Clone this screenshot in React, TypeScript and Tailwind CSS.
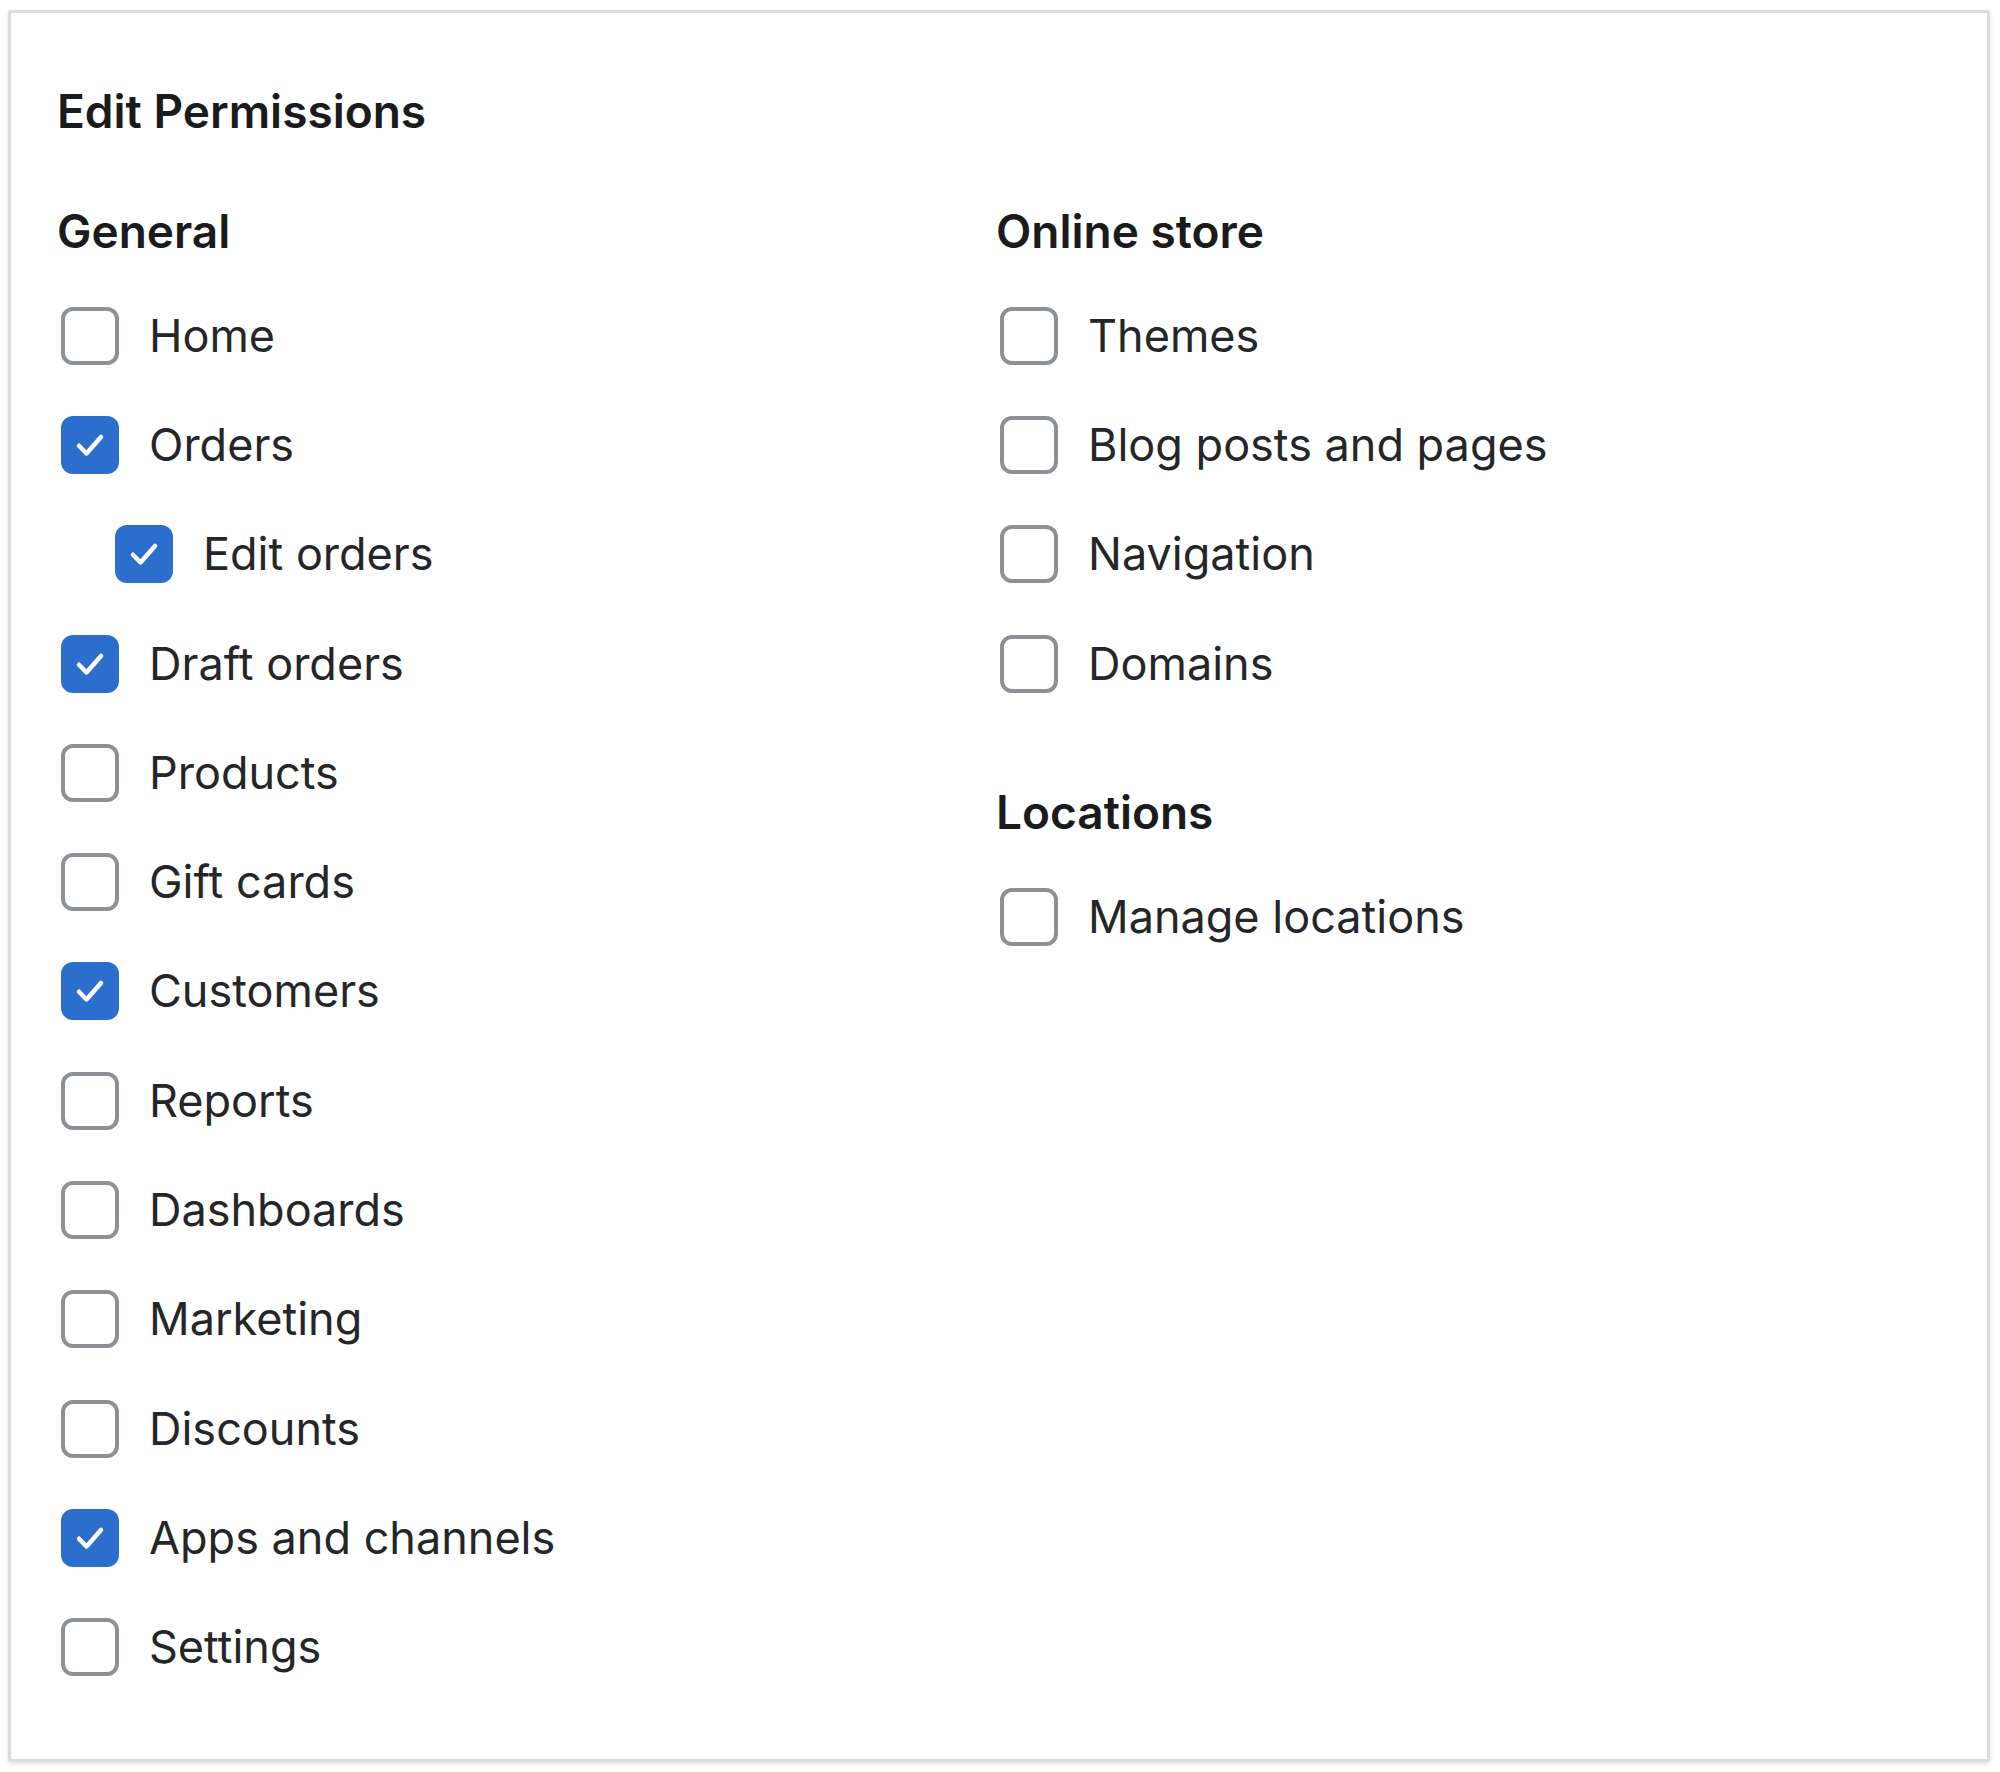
import React from "react";

type Item = { label: string; checked?: boolean; indent?: boolean };

const general: Item[] = [
  { label: "Home" },
  { label: "Orders", checked: true },
  { label: "Edit orders", checked: true, indent: true },
  { label: "Draft orders", checked: true },
  { label: "Products" },
  { label: "Gift cards" },
  { label: "Customers", checked: true },
  { label: "Reports" },
  { label: "Dashboards" },
  { label: "Marketing" },
  { label: "Discounts" },
  { label: "Apps and channels", checked: true },
  { label: "Settings" },
];

const onlineStore: Item[] = [
  { label: "Themes" },
  { label: "Blog posts and pages" },
  { label: "Navigation" },
  { label: "Domains" },
];

const locations: Item[] = [{ label: "Manage locations" }];

function Checkbox({ checked }: { checked?: boolean }) {
  if (checked) {
    return (
      <span className="flex h-[58px] w-[58px] shrink-0 items-center justify-center rounded-[12px] bg-[#2c6ecb]">
        <svg viewBox="0 0 20 20" className="h-[50px] w-[50px]" fill="none">
          <path
            d="M5.6 10.3l3 3.1 5.8-6.6"
            stroke="white"
            strokeWidth="1.8"
            strokeLinecap="round"
            strokeLinejoin="round"
          />
        </svg>
      </span>
    );
  }
  return (
    <span className="h-[58px] w-[58px] shrink-0 rounded-[12px] border-[4px] border-[#8c9196] bg-white" />
  );
}

function Row({ item }: { item: Item }) {
  return (
    <div className={`flex h-[109.3px] items-center gap-[30px] ${item.indent ? "pl-[54px]" : ""}`}>
      <Checkbox checked={item.checked} />
      <span className="text-[45px] leading-[60px] text-[#252627]">{item.label}</span>
    </div>
  );
}

function Heading({ children }: { children: React.ReactNode }) {
  return (
    <h3 className="-ml-[4px] text-[46px] font-semibold leading-[60px] text-[#1a1b1c]">{children}</h3>
  );
}

export default function App() {
  return (
    <div
      className="min-h-screen bg-white pl-[8px] pt-[10px]"
      style={{ fontFamily: "Inter, 'Noto Sans', Arial, sans-serif" }}
    >
      <div className="h-[1752px] w-[1982px] rounded-[2px] border-[3px] border-[#dcdcdc] bg-white pl-[50px] pt-[68px] shadow-[0_2px_4px_rgba(0,0,0,0.12)]">
        <h2 className="-ml-[4px] text-[46px] font-semibold leading-[60px] text-[#1a1b1c]">Edit Permissions</h2>
        <div className="mt-[60px] grid grid-cols-[939px_1fr]">
          <div>
            <Heading>General</Heading>
            <div className="mt-[20px]">
              {general.map((it) => (
                <Row key={it.label} item={it} />
              ))}
            </div>
          </div>
          <div>
            <Heading>Online store</Heading>
            <div className="mt-[20px]">
              {onlineStore.map((it) => (
                <Row key={it.label} item={it} />
              ))}
            </div>
            <div className="mt-[64px]">
              <Heading>Locations</Heading>
            </div>
            <div className="mt-[20px]">
              {locations.map((it) => (
                <Row key={it.label} item={it} />
              ))}
            </div>
          </div>
        </div>
      </div>
    </div>
  );
}
